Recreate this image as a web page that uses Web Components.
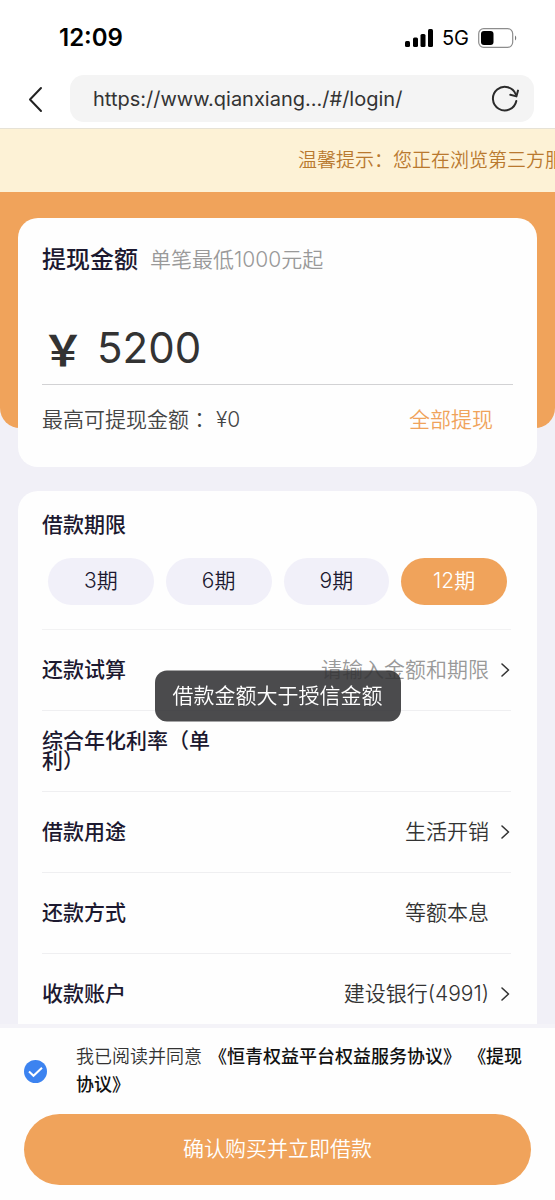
<!DOCTYPE html>
<html lang="zh-CN">
<head>
<meta charset="utf-8">
<meta name="viewport" content="width=device-width, initial-scale=1">
<title>提现</title>
<style>
  :root {
    --accent: #f0a35b;
    --page: #f1f0f7;
    --ink: #1c1930;
    --text: #333;
    --muted: #999;
  }
  body {
    margin: 0;
    height: 100vh;
    background: #fff;
    color: var(--text);
    font-family: Inter, "Noto Sans CJK SC", sans-serif;
    font-size: 21px;
    font-weight: 350;
    line-height: 28px;
  }
</style>
</head>
<body>
<loan-app></loan-app>

<script>
const define = (name, html, setup) => {
  const tpl = document.createElement('template');
  tpl.innerHTML = '<style>*{box-sizing:border-box}button{font:inherit;color:inherit;background:none;border:0;padding:0;cursor:pointer}svg{display:block}</style>' + html;
  customElements.define(name, class extends HTMLElement {
    constructor() {
      super();
      this.attachShadow({ mode: 'open' }).append(tpl.content.cloneNode(true));
    }
    connectedCallback() { if (setup) setup(this, this.shadowRoot); }
  });
};

define('status-bar', `
<style>
  :host { display: flex; align-items: center; justify-content: space-between; height: 75px; padding: 0 38px 0 59px; color: #000; box-sizing: border-box; }
  time { font-size: 24px; font-weight: 600; }
  div { display: flex; align-items: center; gap: 9px; font-size: 20px; font-weight: 400; }
</style>
<time>12:09</time>
<div>
  <svg width="28" height="18" viewBox="0 0 28 18" aria-hidden="true"><rect x="0" y="12" width="5" height="6" rx="1.5"/><rect x="8" y="8.500" width="5" height="9.500" rx="1.500"/><rect x="15.500" y="5" width="5" height="13" rx="1.500"/><rect x="23" y="0" width="5" height="18" rx="1.500"/></svg>
  <span>5G</span>
  <svg width="39" height="20" viewBox="0 0 39 20" aria-hidden="true"><rect x=".7" y=".7" width="34" height="18.600" rx="5" fill="none" stroke="#8d8d8d" stroke-width="1.200"/><rect x="3" y="3" width="12.500" height="14" rx="3"/><path d="M37 7.500c1.600.8 1.600 4.200 0 5z" fill="#777"/></svg>
</div>`);

define('browser-bar', `
<style>
  :host { display: flex; align-items: center; padding: 0 21px 6px 21px; border-bottom: 1px solid #e6e2d6; }
  .back { width: 29px; margin-right: 20px; }
  .address { flex: 1; min-width: 0; height: 47px; display: flex; align-items: center; padding: 0 15px 0 23px; border-radius: 14px; background: #f4f4f4; }
  input { flex: 1; min-width: 0; border: 0; padding: 0; outline: 0; background: none; font: inherit; font-size: 20px; font-weight: 400; color: #333; }
</style>
<button class="back" aria-label="返回"><svg width="29" height="28" viewBox="0 0 29 28" fill="none" stroke="#222" stroke-width="2" stroke-linecap="round" stroke-linejoin="round"><path d="M20 3 9 14.500 20 26"/></svg></button>
<div class="address">
  <input type="text" aria-label="网址" value="https://www.qianxiang.../#/login/">
  <button aria-label="刷新"><svg width="28" height="28" viewBox="0 0 28 28" fill="none" stroke="#2b2b2b" stroke-width="2" stroke-linecap="round" stroke-linejoin="round"><path d="M25.300 16A11.800 11.800 0 1 1 24.800 9.500"/><path d="M19.300 9.800 25.400 11.400 27 5.600"/></svg></button>
</div>`);

define('notice-bar', `
<style>
  :host { display: block; overflow: hidden; white-space: nowrap; padding: 18px 0 17px 298px; background: #fdf2d6; color: #b9792f; font-size: 19px; }
</style>
<slot></slot>`);

define('amount-card', `
<style>
  :host { display: block; position: relative; padding: 26px 18px 0; }
  :host::before { content: ""; position: absolute; inset: 0 0 39px; background: var(--accent); border-radius: 0 0 20px 20px; }
  section { position: relative; background: #fefefe; border-radius: 20px; padding: 25px 24px 33px; }
  header { display: flex; align-items: center; gap: 12px; height: 34px; }
  h2 { margin: 0; font-size: 24px; font-weight: 500; color: var(--ink); }
  header span { color: var(--muted); }
  .amount { display: flex; align-items: center; height: 108px; padding-top: 34px; border-bottom: 1px solid #d2d2d4; }
  .amount span { width: 55px; font: 700 42px/56px "Noto Sans CJK SC", sans-serif; }
  .amount input { flex: 1; min-width: 0; border: 0; padding: 0; outline: 0; background: none; font: inherit; font-size: 42px; font-weight: 400; line-height: 56px; color: var(--text); }
  footer { display: flex; justify-content: space-between; padding: 21px 20px 0 0; color: #444; }
  .colon { font-family: "Noto Sans CJK TC", sans-serif; line-height: 20px; }
  footer button { color: var(--accent); }
</style>
<section>
  <header><h2>提现金额</h2><span>单笔最低1000元起</span></header>
  <label class="amount"><span>￥</span><input type="text" inputmode="numeric" aria-label="提现金额" value="5200"></label>
  <footer><span>最高可提现金额<span class="colon" lang="zh-TW">：</span> ¥0</span><button>全部提现</button></footer>
</section>`);

define('term-chip', `
<style>
  :host { display: block; }
  button { width: 100%; height: 47px; padding-bottom: 2px; border-radius: 24px; background: #f1f0f9; color: var(--ink); }
  :host([selected]) button { background: var(--accent); color: #fff; }
</style>
<button><slot></slot></button>`, (el, root) => {
  root.querySelector('button').setAttribute('aria-pressed', el.hasAttribute('selected'));
});

define('term-picker', `
<style>
  :host { display: block; padding: 20px 0 24px; border-bottom: 1px solid #f2f2f3; }
  h2 { margin: 0 0 19px; font-size: 21px; font-weight: 500; line-height: 28px; color: var(--ink); }
  div { display: grid; grid-template-columns: repeat(4, 1fr); gap: 12px; padding: 0 4px 0 6px; }
</style>
<h2>借款期限</h2>
<div><slot></slot></div>`);

define('info-row', `
<style>
  :host { display: flex; align-items: center; justify-content: space-between; height: 81px; border-bottom: 1px solid #efeff1; box-sizing: border-box; color: var(--text); }
  :host([placeholder]) { color: var(--muted); }
  h3 { margin: 0; max-width: 168px; font-size: 21px; font-weight: 500; line-height: 20px; color: var(--ink); }
  button, .value { display: flex; align-items: center; gap: 11px; padding-bottom: 1px; }
  .value { padding-right: 22px; }
  svg { width: 11px; flex: none; }
</style>
<h3></h3>`, (el, root) => {
  root.querySelector('h3').textContent = el.getAttribute('label');
  const link = el.hasAttribute('link');
  const value = document.createElement(link ? 'button' : 'div');
  value.className = link ? '' : 'value';
  value.innerHTML = '<slot></slot>' + (link ? '<svg width="11" height="16" viewBox="0 0 11 16" fill="none" stroke="#333" stroke-width="1.6" stroke-linecap="round" stroke-linejoin="round"><path d="M2 2 8.500 8 2 14"/></svg>' : '');
  root.append(value);
});

define('loan-details', `
<style>
  :host { display: block; margin: 24px 18px; padding: 0 26px 24px 24px; background: #fefefe; border-radius: 20px; }
</style>
<slot></slot>`);

define('toast-message', `
<style>
  :host { position: fixed; z-index: 2; left: 50%; top: 58%; transform: translate(-50%, -50%); padding: 11px 18px 12px; border-radius: 12px; background: rgba(50, 50, 52, .88); color: #fff; white-space: nowrap; }
</style>
<div role="status"><slot></slot></div>`);

define('confirm-bar', `
<style>
  :host { display: block; padding: 15px 24px 15px; border-top: 4px solid #f4f3f8; background: #fefefe; }
  .agree { display: grid; grid-template-columns: 23px 1fr; gap: 29px; align-items: center; margin-bottom: 15px; font-size: 18px; color: #333; }
  input { appearance: none; width: 23px; height: 23px; margin: 0; border-radius: 50%; background: #ccc; }
  input:checked { background: #3c83f0 url("data:image/svg+xml,%3Csvg xmlns='http://www.w3.org/2000/svg' viewBox='0 0 23 23'%3E%3Cpath d='M5 11.500l4.500 4.300 8.500-8' fill='none' stroke='white' stroke-width='2'/%3E%3C/svg%3E"); }
  a { margin-left: 2px; color: #111; font-weight: 500; text-decoration: none; }
  .submit { display: block; width: 100%; height: 71px; padding-bottom: 2px; border-radius: 36px; background: var(--accent); color: #fff; }
</style>
<div class="agree">
  <input type="checkbox" id="agree" checked>
  <label for="agree">我已阅读并同意 <a href="#service">《恒青权益平台权益服务协议》</a> <a href="#withdraw">《提现协议》</a></label>
</div>
<button class="submit">确认购买并立即借款</button>`);

define('loan-app', `
<style>
  :host { display: flex; flex-direction: column; height: 100%; }
  main { flex: 1; min-height: 0; overflow-y: auto; scrollbar-width: none; background: var(--page); }
</style>
<status-bar></status-bar>
<browser-bar></browser-bar>
<notice-bar>温馨提示：您正在浏览第三方服</notice-bar>
<main>
  <amount-card></amount-card>
  <loan-details>
    <term-picker>
      <term-chip>3期</term-chip>
      <term-chip>6期</term-chip>
      <term-chip>9期</term-chip>
      <term-chip selected>12期</term-chip>
    </term-picker>
    <info-row label="还款试算" link placeholder>请输入金额和期限</info-row>
    <info-row label="综合年化利率（单利）"></info-row>
    <info-row label="借款用途" link>生活开销</info-row>
    <info-row label="还款方式">等额本息</info-row>
    <info-row label="收款账户" link>建设银行(4991)</info-row>
  </loan-details>
</main>
<confirm-bar></confirm-bar>
<toast-message>借款金额大于授信金额</toast-message>`);
</script>
</body>
</html>
